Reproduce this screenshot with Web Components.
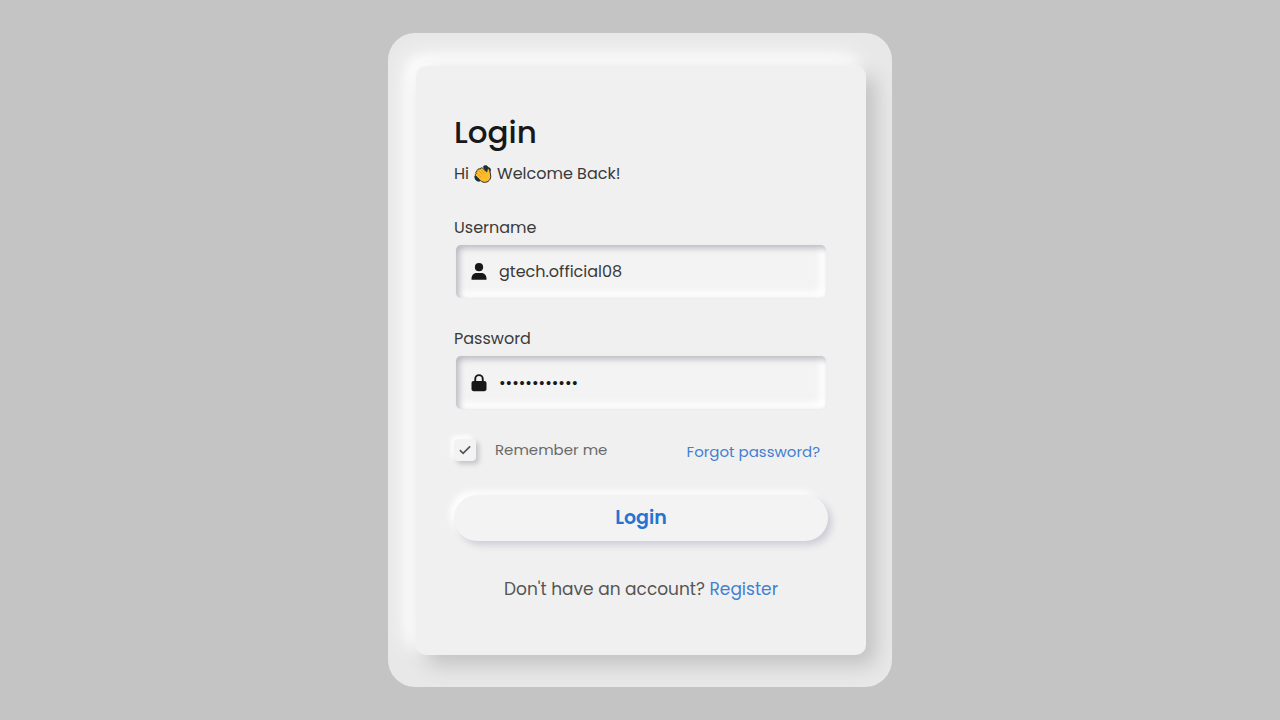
<!DOCTYPE html>
<html lang="en">
<head>
<meta charset="utf-8">
<meta name="viewport" content="width=device-width, initial-scale=1">
<title>Login</title>
<style>
  body {
    margin: 0;
    background: #c4c4c4;
    color: #3a3a3a;
    font: 16px/24px Poppins, Inter, sans-serif;
    font-feature-settings: "cv11";
  }
</style>
</head>
<body>
<login-page>
  <login-card>
    <text-field slot="fields" label="Username" type="text" name="username" value="gtech.official08">
      <svg slot="icon" viewBox="0 0 16 18" width="16" height="18" fill="#18181b" aria-hidden="true">
        <circle cx="8" cy="4.2" r="4.1"/>
        <path d="M.5 16.8C.2 12.2 2.5 10 5.6 10h4.8c3.1 0 5.4 2.2 5.1 6.8z"/>
      </svg>
    </text-field>
    <text-field slot="fields" label="Password" type="password" name="password" value="abcdefghijkl">
      <svg slot="icon" viewBox="0 0 16 18" width="16" height="18" fill="#18181b" aria-hidden="true">
        <path d="M3.3 7V4.9a4.7 4.7 0 0 1 9.4 0V7h.6c1.3 0 2.2.9 2.2 2.2v5.8c0 1.3-.9 2.2-2.2 2.2H2.7c-1.3 0-2.2-.9-2.2-2.2V9.2C.5 7.9 1.4 7 2.7 7zm1.9 0h5.6V4.9a2.8 2.8 0 0 0-5.6 0z"/>
      </svg>
    </text-field>
    <check-option slot="options">Remember me</check-option>
    <text-link slot="options" href="#forgot" class="small">Forgot password?</text-link>
    <soft-button slot="action">Login</soft-button>
    <span slot="footer">Don't have an account? <text-link href="#register">Register</text-link></span>
  </login-card>
</login-page>

<script>
const define = (name, html, setup) => {
  const template = document.createElement('template');
  template.innerHTML = html;
  customElements.define(name, class extends HTMLElement {
    constructor() {
      super();
      this.attachShadow({ mode: 'open' }).append(template.content.cloneNode(true));
    }
    connectedCallback() {
      if (setup) setup(this, this.shadowRoot);
    }
  });
};

define('login-page', `
  <style>
    :host { display: flex; min-height: 100vh; align-items: center; justify-content: center; }
    main {
      box-sizing: border-box; width: 100%; max-width: 504px;
      padding: 33px 26px 32px 28px; border-radius: 27px; background: #e8e8e8; overflow: hidden;
    }
  </style>
  <main><slot></slot></main>
`);

define('login-card', `
  <style>
    :host {
      display: block; padding: 46px 38px 54px; border-radius: 10px; background: #f0f0f0;
      box-shadow: 10px 10px 20px #c2c2c2, -7px -7px 12px #fbfbfb, -10px -10px 24px #fff;
    }
    h1 { margin: 0; font-size: 31px; line-height: 40px; font-weight: 500; color: #18181b; }
    p { margin: 0; }
    .welcome { margin: 10px 0 30px; display: flex; gap: 4px; align-items: center; }
    .fields { display: grid; grid-template-columns: minmax(0, 1fr); gap: 29px; }
    .options { display: flex; justify-content: space-between; align-items: flex-end; padding-right: 8px; margin: 29px 0 33px; }
    .footer { margin-top: 36px; text-align: center; font-size: 17px; color: #555; }
  </style>
  <form>
    <h1>Login</h1>
    <p class="welcome"><span>Hi</span>
      <svg viewBox="0 0 20 20" width="20" height="20" role="img" aria-label="waving hand">
        <path d="M1.3 12.2c.2 3.2 1.6 5 4.8 5.5l2-1.2-4.8-5.5zM10 2.7c1.8-2.2 4-1.6 5.3.3 2.3.6 3 2.2 2.4 4.5L12 7z" fill="#16323b"/>
        <path d="M4.7 5.9c.4-1.2 1.6-1.3 2.4-.8.3-1.3 1.7-1.7 2.7-.8l4 3.7.3-2.2c.2-1.5 2.2-1.4 2.5 0l1 5.1c.9 4.5-2.6 7.8-6.4 7.4-2-.2-3.2-1.1-4.7-2.6l-3.7-3.6c-1-1-.5-2 .4-2.4-.9-1.2-.2-2.3.8-2.4-.3-.5-.1-1 .7-1.4z" fill="#fbbd2c" stroke="#2b2a25" stroke-width="1"/>
        <path d="M5.5 6.5l4.3 4.2M4.2 9.4l3.8 3.8M7.5 5.3l4.2 4.2" stroke="#d98c16" stroke-width=".7" fill="none"/>
      </svg>
      <span>Welcome Back!</span></p>
    <div class="fields"><slot name="fields"></slot></div>
    <div class="options"><slot name="options"></slot></div>
    <slot name="action"></slot>
    <p class="footer"><slot name="footer"></slot></p>
  </form>
`);

define('text-field', `
  <style>
    :host { display: block; }
    label { display: block; margin-bottom: 5px; }
    .box {
      display: flex; align-items: center; gap: 12px; height: 53px; margin: 0 2px; padding: 0 15px;
      box-sizing: border-box; border-radius: 5px; background: #f3f3f3;
      box-shadow: inset 3px 3px 6px #b8b9c0, inset -6px -6px 7px #fff, 0 0 2px #e8e8ec;
    }
    ::slotted(svg) { flex: none; }
    input {
      flex: 1; min-width: 0; padding: 0; border: 0; outline: 0; background: none;
      font: inherit; font-feature-settings: inherit; color: #3a3a3a;
    }
    input[type=password] { color: #18181b; }
  </style>
  <label for="control"></label>
  <div class="box"><slot name="icon"></slot><input id="control"></div>
`, (host, root) => {
  root.querySelector('label').textContent = host.getAttribute('label');
  const input = root.querySelector('input');
  for (const key of ['type', 'name', 'value']) input.setAttribute(key, host.getAttribute(key));
});

define('check-option', `
  <style>
    :host { display: block; color: #6a6a6a; font-size: 15px; }
    label { display: grid; grid-template-columns: 22px auto; align-items: center; column-gap: 19px; }
    input {
      appearance: none; width: 22px; height: 22px; margin: 0; grid-area: 1 / 1;
      border-radius: 4px; background: #f3f3f3;
      box-shadow: 3px 3px 5px #c4c4c8, -3px -3px 5px #fff;
    }
    svg { grid-area: 1 / 1; justify-self: center; pointer-events: none; visibility: hidden; z-index: 1; }
    input:checked + svg { visibility: visible; }
  </style>
  <label>
    <input type="checkbox" checked>
    <svg viewBox="0 0 12 10" width="12" height="10" fill="none" stroke="#555" stroke-width="1.7" aria-hidden="true"><path d="M.9 5.2l3.2 3.1 7-7"/></svg>
    <span><slot></slot></span>
  </label>
`);

define('text-link', `
  <style>
    :host { display: inline; }
    :host(.small) { font-size: 15px; line-height: 20px; }
    a { color: #4280d2; text-decoration: none; }
  </style>
  <a><slot></slot></a>
`, (host, root) => {
  root.querySelector('a').setAttribute('href', host.getAttribute('href'));
});

define('soft-button', `
  <style>
    :host { display: block; }
    button {
      display: block; width: 100%; height: 46px; padding: 0; border: 0; border-radius: 23px;
      background: #f3f3f3; color: #2474d2; font: inherit; font-feature-settings: inherit;
      font-size: 19px; font-weight: 600; cursor: pointer;
      box-shadow: 4px 4px 7px #cdcdd8, -4px -4px 7px #fff;
    }
  </style>
  <button type="button"><slot></slot></button>
`);
</script>
</body>
</html>
